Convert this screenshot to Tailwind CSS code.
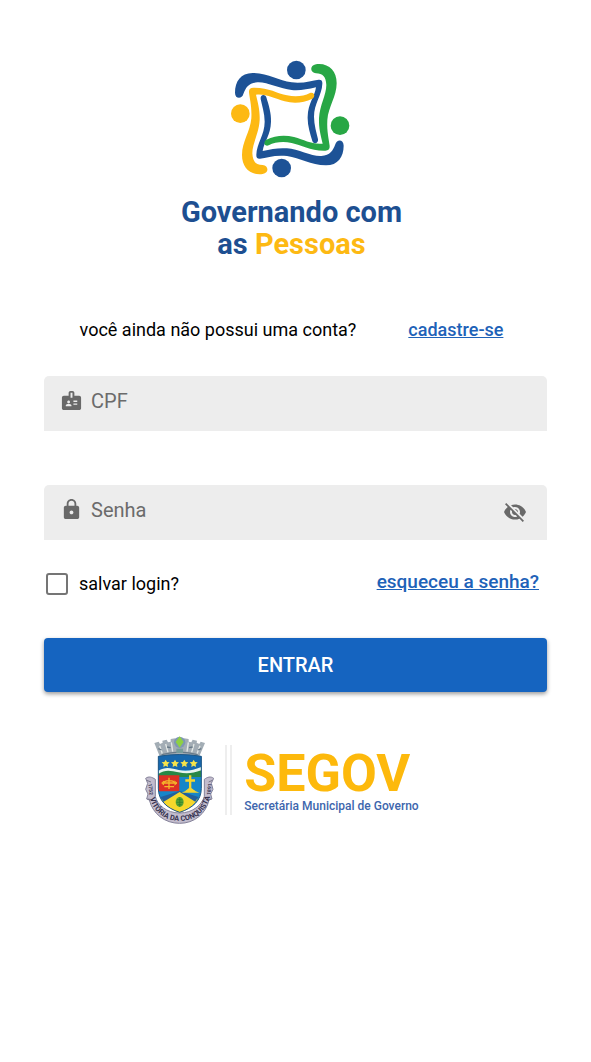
<!DOCTYPE html>
<html lang="pt-BR">
<head>
  <meta charset="UTF-8" />
  <meta name="viewport" content="width=device-width, initial-scale=1" />
  <title>Governando com as Pessoas</title>
  <script src="https://cdn.jsdelivr.net/npm/@tailwindcss/browser@4"></script>
</head>
<body class="bg-white min-h-screen font-[Roboto,sans-serif] text-black">
  <main class="px-11 pt-[50px] pb-8">

    <!-- Logo -->
    <header class="flex flex-col items-center">
      <svg class="w-[151px] h-[140px]" viewBox="0 0 453 420" aria-hidden="true">
        <path id="braco" fill="#1d5296" d="M45 128C45 95 62 69 98 69C145 69 175 92 215 97C250 101 275 92 296 89Q308 88 307 101C306 135 282 160 282 200C282 225 290 248 294 268C296 281 281 284 277 273C270 250 262 225 263 200C264 160 284 140 288 112C262 118 240 122 215 120C180 117 140 95 112 97C85 99 78 112 70 132C66 148 45 148 45 128Z" />
        <use href="#braco" transform="rotate(180 208 207.500)" />
        <path id="perna" fill="#28a745" d="M288 43C325 38 350 62 350 100C350 140 325 170 322 210C320 245 327 268 329 288Q330 302 316 302C270 303 245 285 215 279C190 274 165 276 146 286C134 291 128 276 139 269C165 256 195 254 222 261C255 270 275 284 308 281C302 255 296 235 297 205C299 165 319 135 319 105C318 80 308 70 288 70C270 68 268 47 288 43Z" />
        <path fill="#fdb913" transform="rotate(180 208 207.500)" d="M288 43C325 38 350 62 350 100C350 140 325 170 322 210C320 245 327 268 329 288Q330 302 316 302C270 303 245 285 215 279C190 274 165 276 146 286C134 291 128 276 139 269C165 256 195 254 222 261C255 270 275 284 308 281C302 255 296 235 297 205C299 165 319 135 319 105C318 80 308 70 288 70C270 68 268 47 288 43Z" />
        <circle cx="229" cy="60" r="28" fill="#1d5296" />
        <circle cx="61" cy="191" r="28" fill="#fdb913" />
        <circle cx="360" cy="227" r="28" fill="#28a745" />
        <circle cx="185" cy="354" r="28" fill="#1d5296" />
      </svg>
      <h1 class="mt-[6px] pr-2 text-center text-[29px] leading-[32px] font-bold text-[#1d4f91]">
        Governando com<br />as <span class="text-[#fdb913]">Pessoas</span>
      </h1>
    </header>

    <!-- Cadastro -->
    <div class="mt-[58px] flex justify-center gap-[52px] pr-2 text-[18px] leading-6">
      <p>você ainda não possui uma conta?</p>
      <a href="#cadastro" class="font-medium text-[#1e62b8] underline">cadastre-se</a>
    </div>

    <!-- Login -->
    <form class="mt-[34px]">
      <div class="flex h-[55px] items-center rounded-t-[5px] bg-[#ededed] pl-4 pr-5 pb-[6px]">
        <label for="cpf" aria-label="CPF">
          <svg class="size-[23px]" viewBox="0 0 24 24" fill="#696969">
            <path fill-rule="evenodd" d="M20 7h-5V4c0-1.100-.900-2-2-2h-2c-1.100 0-2 .900-2 2v3H4c-1.100 0-2 .900-2 2v11c0 1.100.900 2 2 2h16c1.100 0 2-.900 2-2V9c0-1.100-.900-2-2-2zM9 12c.830 0 1.500.670 1.500 1.500S9.830 15 9 15s-1.500-.670-1.500-1.500S8.170 12 9 12zm3 6H6v-.750c0-1 2-1.500 3-1.500s3 .500 3 1.500V18zm1-9h-2V4h2v5zm5 7.500h-4V15h4v1.500zm0-3h-4V12h4v1.500z" />
          </svg>
        </label>
        <input id="cpf" name="cpf" type="text" inputmode="numeric" placeholder="CPF" class="ml-2 min-w-0 flex-1 bg-transparent text-[20px] leading-6 placeholder:text-[#6b6b6b] outline-none" />
      </div>

      <div class="mt-[54px] flex h-[55px] items-center rounded-t-[5px] bg-[#ededed] pl-4 pr-5 pb-[6px]">
        <label for="senha" aria-label="Senha">
          <svg class="size-[23px]" viewBox="0 0 24 24" fill="#696969">
            <path d="M18 8h-1V6c0-2.760-2.240-5-5-5S7 3.240 7 6v2H6c-1.100 0-2 .900-2 2v10c0 1.100.900 2 2 2h12c1.100 0 2-.900 2-2V10c0-1.100-.900-2-2-2zm-6 9c-1.100 0-2-.900-2-2s.900-2 2-2 2 .900 2 2-.900 2-2 2zm3.100-9H8.900V6c0-1.710 1.390-3.100 3.100-3.100s3.100 1.390 3.100 3.100v2z" />
          </svg>
        </label>
        <input id="senha" name="senha" type="password" placeholder="Senha" class="ml-2 min-w-0 flex-1 bg-transparent text-[20px] leading-6 placeholder:text-[#6b6b6b] outline-none" />
        <button type="button" id="verSenha" aria-label="Mostrar senha" class="pt-1">
          <svg class="size-6" viewBox="0 0 24 24" fill="#696969">
            <path d="M12 7c2.760 0 5 2.240 5 5 0 .650-.130 1.260-.360 1.830l2.920 2.920c1.510-1.260 2.700-2.890 3.430-4.750-1.730-4.390-6-7.500-11-7.500-1.400 0-2.740.250-3.980.700l2.160 2.160C10.740 7.130 11.350 7 12 7zM2 4.270l2.280 2.280.460.460C3.080 8.300 1.780 10.020 1 12c1.730 4.390 6 7.500 11 7.500 1.550 0 3.030-.300 4.380-.840l.420.420L19.730 22 21 20.730 3.270 3 2 4.270zM7.530 9.800l1.550 1.550c-.050.210-.080.430-.080.650 0 1.660 1.340 3 3 3 .220 0 .440-.030.650-.080l1.550 1.550c-.670.330-1.410.530-2.200.530-2.760 0-5-2.240-5-5 0-.790.200-1.530.530-2.200zm4.310-.780l3.150 3.150.020-.160c0-1.660-1.340-3-3-3l-.170.010z" />
          </svg>
        </button>
      </div>

      <div class="mt-[30px] flex items-start justify-between pl-[2px] pr-2">
        <label class="flex items-center gap-[11px] pt-[2px] text-[18px] leading-6">
          <input type="checkbox" name="salvar" class="size-[22px] appearance-none rounded-[3px] border-2 border-[#757575] bg-white checked:bg-[#1564c0]" />
          salvar login?
        </label>
        <a href="#senha" class="text-[19px] leading-6 font-medium text-[#1e62b8] underline">esqueceu a senha?</a>
      </div>

      <button type="submit" class="mt-[42px] block h-[54px] w-full rounded-[4px] bg-[#1564c0] text-[20px] font-medium text-white shadow-[0_2px_4px_rgba(0,0,0,0.4)]">ENTRAR</button>
    </form>

    <!-- Rodapé -->
    <footer class="mt-[43px] flex items-center justify-center pr-7">
      <svg class="w-[70px] h-[90px]" viewBox="25 30 210 270" role="img" aria-label="Brasão de Vitória da Conquista">
        <!-- coroa -->
        <path d="M56 54l13-4 4 7 8-4-1-6 13-3 4 8 8-2 0-8 14-2 3 7h20l3-7 14 2 0 8 8 2 4-8 13 3-1 6 8 4 4-7 13 4-17 40H72z" fill="#a3adb5" />
        <path d="M72 62l8 24M90 57l7 25M107 52l4 28M158 52l-4 28M175 57l-7 25M193 62l-9 24" stroke="#e3e8e6" stroke-width="4" />
        <path d="M68 71l10 4M94 66l11 2M160 68l11-2M187 75l10-4M78 89c35-10 74-10 108 0" fill="none" stroke="#687a88" stroke-width="4" />
        <circle cx="132" cy="52" r="17" fill="#7f97b4" />
        <path d="M132 34l6 8 6 9-6 8-6 9-6-9-6-8 6-9z" fill="#8ed143" />
        <path d="M122 71h20v13h-20z" fill="#779c9b" />
        <!-- fita -->
        <path d="M30 160c9-7 19-4 29 3v52c6 24 33 49 73 49s67-25 74-50v-51c9-7 19-10 28-3l-7 15 5 18-7 14 4 15-9 3c-9 41-44 70-88 70-45 0-81-29-91-70l-8-3 4-15-7-14 6-18z" fill="#c2bccd" stroke="#85829a" stroke-width="3" />
        <path d="M33 166l13 5M219 171l11-5M36 222l16 3M212 225l14-3" stroke="#77758a" stroke-width="3" />
        <!-- escudo -->
        <path d="M68 94Q132 83 197 94V190C197 226 172 249 132 262C92 249 68 226 68 190Z" fill="#1686c9" />
        <path d="M68 94Q132 83 197 94V135H68Z" fill="#1768ae" />
        <path d="M68 143c20-19 39-12 58-7 25 7 45 4 71-9v29H68z" fill="#278847" />
        <path d="M68 138c22-15 41-7 61-3 24 5 43 1 68-9v10c-27 10-45 11-69 6-23-5-40-9-60 5z" fill="#e7f4ef" />
        <path d="M68 151h63v48H70Q68 195 68 190Z" fill="#dc2f25" />
        <path d="M132 200l54 22c-13 19-30 31-54 40-25-9-43-21-55-40z" fill="#f4d321" />
        <path d="M75 216l57-18 56 18-12 18-44-29-46 29z" fill="#225f9c" />
        <path d="M83 231l49-30 48 30c-12 14-27 24-48 31-22-7-37-17-49-31z" fill="#f6d72b" />
        <path d="M80 174h42M100 158v34M82 178c2-15 35-15 38 0M86 185h29" fill="none" stroke="#f5b62b" stroke-width="4" />
        <path d="M116 168l8 6-8 6M85 168l-7 6 7 6" fill="none" stroke="#f5b62b" stroke-width="3" />
        <path d="M160 151h7v12h11v7h-11v19l12 9h-30l11-9v-19h-11v-7h11z" fill="#f7d62d" />
        <path d="M138 203q25-16 53 0z" fill="#f0d631" />
        <ellipse cx="132" cy="231" rx="12" ry="15" fill="#55a334" />
        <path d="M124 224h16M122 232h20M126 239h12M132 217v28" stroke="#2f782f" stroke-width="2" />
        <path d="M68 94Q132 83 197 94V190C197 226 172 249 132 262C92 249 68 226 68 190Z" fill="none" stroke="#215784" stroke-width="3" />
        <g fill="#f6e34a">
          <path id="estrela" d="M90 104l4 7 8 1-6 6 1 8-7-4-7 4 1-8-6-6 8-1z" />
          <use href="#estrela" x="28" />
          <use href="#estrela" x="56" />
          <use href="#estrela" x="84" />
        </g>
        <path id="curva" d="M42 216C52 260 88 288 132 288C177 288 212 260 224 212" fill="none" />
        <g fill="#35324f" font-family="Roboto, sans-serif" font-weight="700">
          <text font-size="22"><textPath href="#curva" startOffset="50%" text-anchor="middle">VITÓRIA DA CONQUISTA</textPath></text>
          <text font-size="15" transform="translate(38 176) rotate(84)">1752</text>
          <text font-size="15" transform="translate(224 210) rotate(-84)">1891</text>
        </g>
      </svg>
      <div class="ml-[11px] h-[70px] w-[7px] border-x-2 border-[#eeeeee]"></div>
      <div class="ml-3 pt-1">
        <p class="text-[52px] leading-[48px] font-bold text-[#fdb90c]">SEGOV</p>
        <p class="text-[12px] leading-4 font-medium text-[#3d66ad]">Secretária Municipal de Governo</p>
      </div>
    </footer>
  </main>

  <script>
    // Mostrar / esconder senha
    document.getElementById('verSenha').addEventListener('click', function () {
      const senha = document.getElementById('senha');
      senha.type = senha.type === 'password' ? 'text' : 'password';
    });
  </script>
</body>
</html>
